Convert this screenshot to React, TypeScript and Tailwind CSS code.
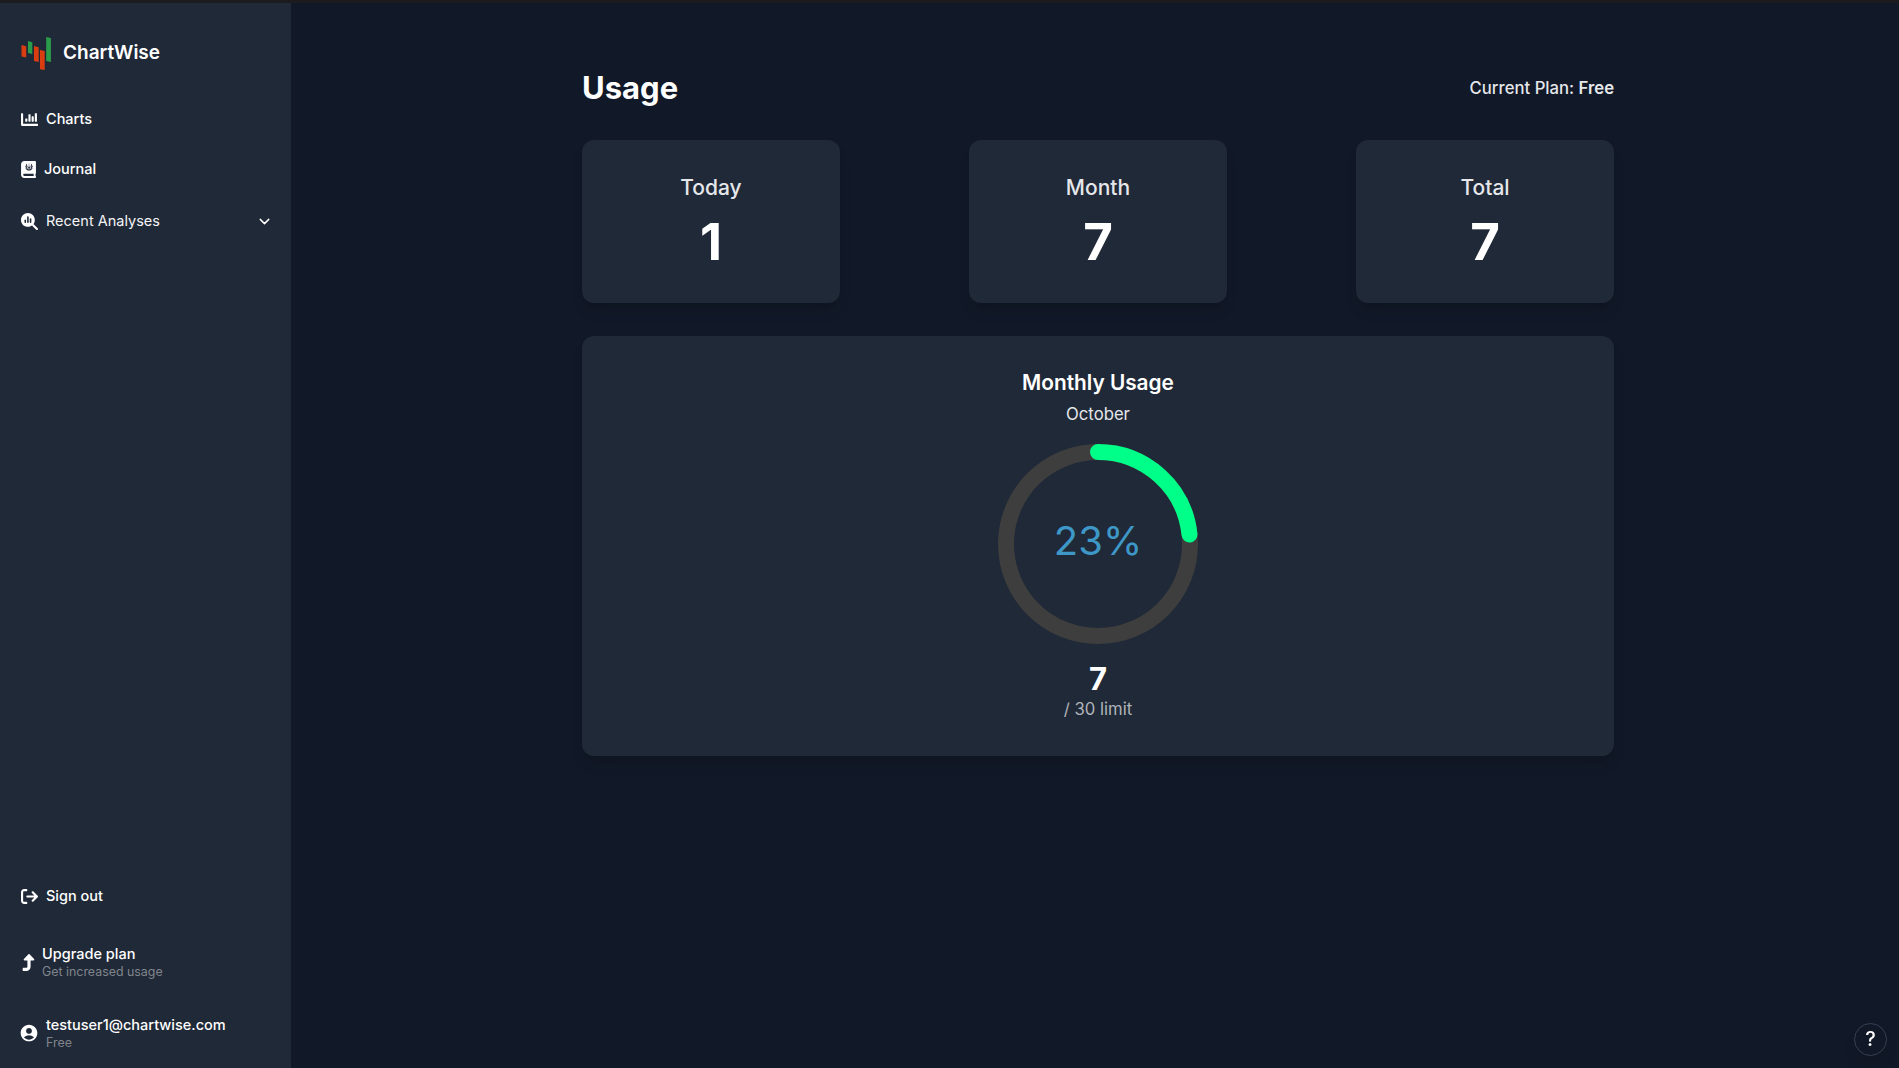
import { FaChartBar, FaJournalWhills } from "react-icons/fa";
import { FaMagnifyingGlassChart, FaArrowRightFromBracket, FaTurnUp } from "react-icons/fa6";
import { MdAccountCircle } from "react-icons/md";
import { ChevronDown } from "lucide-react";
import type { ReactNode } from "react";

function Logo() {
  return (
    <svg className="h-[34px] w-[31px] shrink-0" viewBox="0 0 31 34">
      <path d="M0.5 8l4.700 1.200v11.200l-4.700-1z" fill="#d93d10" />
      <path d="M7 4l4.300 1.200v11.800l-4.300-1z" fill="#2a9d4a" />
      <path d="M13 9l4.700 1.200v14.900l-4.700-1z" fill="#d93d10" />
      <path d="M19 13l4.700 1v19l-4.700-.8z" fill="#d93d10" />
      <path d="M25.200 0l4.700 1v24l-4.700-1z" fill="#2a9d4a" />
    </svg>
  );
}

function Stat({ label, value }: { label: string; value: string }) {
  return (
    <div className="flex h-[163px] w-[258px] flex-col items-center rounded-xl bg-[#202937] pt-8 shadow-lg">
      <h2 className="text-[21px] leading-[32px] font-medium text-gray-200">{label}</h2>
      <p className="mt-[10px] text-[51px] leading-[56px] font-bold">{value}</p>
    </div>
  );
}

function NavItem({ icon, children, className }: { icon: ReactNode; children: ReactNode; className: string }) {
  return <div className={`flex items-center pl-[21px] ${className}`}>{icon}{children}</div>;
}

export default function App() {
  return (
    <div className="flex h-screen flex-col overflow-hidden bg-[#111827] font-['Inter',sans-serif] text-white antialiased">
      <div className="h-[3px] shrink-0 bg-[#1c1c1e]" />
      <div className="flex min-h-0 flex-1">
        <aside className="flex w-[291px] shrink-0 flex-col bg-[#202937] text-[14.500px] font-medium">
          <div className="mt-[34px] flex h-[34px] items-center gap-[11px] pl-[21px]">
            <Logo />
            <span className="pb-0.5 text-[19px] font-semibold">ChartWise</span>
          </div>
          <NavItem className="mt-[36px] h-6 gap-2" icon={<FaChartBar size={17} />}>Charts</NavItem>
          <NavItem className="mt-[26px] h-6 gap-2" icon={<FaJournalWhills size={17} className="w-[15px]" />}>Journal</NavItem>
          <NavItem className="mt-7 h-6 gap-2 pr-[18px] font-normal" icon={<FaMagnifyingGlassChart size={17} />}>
            <span className="flex-1 text-gray-100">Recent Analyses</span>
            <ChevronDown size={17} />
          </NavItem>
          <div className="flex-1" />
          <NavItem className="mb-[35px] h-6 gap-2" icon={<FaArrowRightFromBracket size={17} />}>Sign out</NavItem>
          <NavItem className="mb-[33px] h-[38px] gap-[5px]" icon={<FaTurnUp size={17} className="w-4" />}>
            <div>
              <p className="leading-5">Upgrade plan</p>
              <p className="text-[12.400px] leading-4 font-normal text-[#80858d]">Get increased usage</p>
            </div>
          </NavItem>
          <NavItem className="mb-4 h-[38px] gap-2" icon={<MdAccountCircle size={20} className="-mr-[1px] -ml-[2px]" />}>
            <div>
              <p className="leading-5">testuser1@chartwise.com</p>
              <p className="text-[12.400px] leading-4 font-normal text-[#80858d]">Free</p>
            </div>
          </NavItem>
        </aside>
        <main className="flex-1">
          <div className="ml-[291px] w-[1032px] pt-[65px]">
            <header className="flex h-10 items-center justify-between">
              <h1 className="text-[31px] font-bold">Usage</h1>
              <p className="text-[16.700px] leading-6 font-medium text-gray-200">Current Plan: <span className="font-semibold">Free</span></p>
            </header>
            <section className="mt-8 flex justify-between">
              <Stat label="Today" value="1" />
              <Stat label="Month" value="7" />
              <Stat label="Total" value="7" />
            </section>
            <section className="mt-[33px] flex h-[420px] flex-col items-center rounded-xl bg-[#202937] pt-8 shadow-lg">
              <h2 className="text-[20.800px] leading-[30px] font-semibold">Monthly Usage</h2>
              <p className="mt-1 text-[16.700px] leading-6 text-gray-200">October</p>
              <svg className="mt-[18px] size-[200px] shrink-0" viewBox="0 0 100 100">
                <circle cx="50" cy="50" r="46" fill="none" stroke="#3e3e3e" strokeWidth="8" />
                <circle cx="50" cy="50" r="46" fill="none" stroke="#00ff88" strokeWidth="8" strokeLinecap="round" pathLength="100" strokeDasharray="23.333 100" transform="rotate(-90 50 50)" />
                <text x="50" y="50" fill="#3e98c7" fontSize="20" textAnchor="middle" dominantBaseline="middle">23%</text>
              </svg>
              <p className="mt-[17px] text-[31px] leading-9 font-bold">7</p>
              <p className="text-[16.700px] leading-6 text-[#b0b4ba]">/ 30 limit</p>
            </section>
          </div>
        </main>
      </div>
      <button className="fixed right-[12px] bottom-[12px] flex size-[33px] items-center justify-center rounded-full border border-gray-700 bg-[#111827] pb-px text-[20px] font-medium shadow-lg">?</button>
    </div>
  );
}
